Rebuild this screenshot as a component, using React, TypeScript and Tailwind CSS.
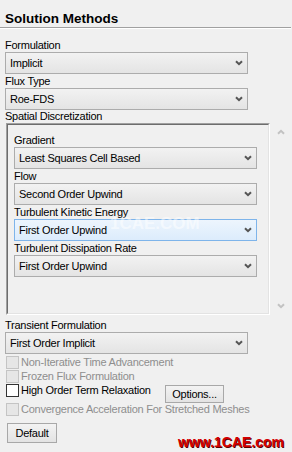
import React from "react";

function Chevron({ color = "#555" }: { color?: string }) {
  return (
    <svg width="8" height="6" viewBox="0 0 8 6" className="shrink-0">
      <path d="M1 1.2 L4 4.2 L7 1.2" fill="none" stroke={color} strokeWidth="2" />
    </svg>
  );
}

function Select({ value, active }: { value: string; active?: boolean }) {
  return (
    <div
      className={`flex h-[22px] w-[243px] items-center justify-between border pl-[4px] pr-[4px] ${
        active
          ? "border-[#7eb4ea] bg-linear-to-b from-[#edf5fd] to-[#dcecfc]"
          : "border-[#acacac] bg-linear-to-b from-[#f2f2f2] to-[#e4e4e4]"
      }`}
    >
      <span className="leading-[14px]">{value}</span>
      <Chevron />
    </div>
  );
}

function Field({ label, value, active }: { label: string; value: string; active?: boolean }) {
  return (
    <div>
      <div className="h-[14px] leading-[14px]">{label}</div>
      <Select value={value} active={active} />
    </div>
  );
}

function Check({ label, disabled }: { label: string; disabled?: boolean }) {
  return (
    <div className="flex items-start gap-[2px]">
      <div
        className={`h-[13px] w-[13px] shrink-0 border ${
          disabled ? "border-[#c4c4c4] bg-[#e6e6e6]" : "border-[#333] bg-white"
        }`}
      />
      <span className={`whitespace-nowrap leading-[13px] ${disabled ? "text-[#8e8e8e]" : "text-black"}`}>{label}</span>
    </div>
  );
}

function Button({ children, className = "" }: { children: React.ReactNode; className?: string }) {
  return (
    <div
      className={`flex items-center justify-center border border-[#a8a8a8] bg-linear-to-b from-[#f3f3f3] to-[#e3e3e3] leading-[14px] ${className}`}
    >
      {children}
    </div>
  );
}

export default function App() {
  return (
    <div className="relative h-[452px] w-[292px] overflow-hidden bg-[#f0f0f0] font-['Liberation_Sans',Arial,sans-serif] text-[11px] tracking-[-0.25px] text-black">
      {/* Title */}
      <div className="flex h-[27px] items-end pl-[5px]">
        <h1 className="text-[13.5px] font-bold leading-[16px] tracking-normal">Solution Methods</h1>
      </div>
      <div className="h-[2px] w-[291px] border-t border-b border-t-[#a0a0a0] border-b-white" />

      {/* Main content */}
      <div className="pl-[5px] pt-[9px]">
        <Field label="Formulation" value="Implicit" />
        <Field label="Flux Type" value="Roe-FDS" />
        <div className="h-[13px] leading-[13px]">Spatial Discretization</div>

        <div className="flex">
          <div className="ml-[1px] h-[192px] w-[264px] border border-t-[#a0a0a0] border-l-[#a0a0a0] border-r-white border-b-white">
            <div className="h-full border border-t-[#6d6d6d] border-l-[#6d6d6d] border-r-[#e3e3e3] border-b-[#e3e3e3] pl-[6px] pt-[8px]">
              <Field label="Gradient" value="Least Squares Cell Based" />
              <Field label="Flow" value="Second Order Upwind" />
              <Field label="Turbulent Kinetic Energy" value="First Order Upwind" active />
              <Field label="Turbulent Dissipation Rate" value="First Order Upwind" />
            </div>
          </div>
          {/* Scrollbar */}
          <div className="flex w-[20px] flex-col items-center justify-between pl-[2px] pt-[6px] pb-[6px]">
            <svg width="8" height="6" viewBox="0 0 8 6">
              <path d="M1 4.8 L4 1.8 L7 4.8" fill="none" stroke="#c2c2c2" strokeWidth="2" />
            </svg>
            <Chevron color="#c2c2c2" />
          </div>
        </div>

        <div className="mt-[3px]">
          <Field label="Transient Formulation" value="First Order Implicit" />
        </div>

        <div className="pl-[1px]">
          <div className="h-[16px] pt-[2px]">
            <Check label="Non-Iterative Time Advancement" disabled />
          </div>
          <div className="h-[14px]">
            <Check label="Frozen Flux Formulation" disabled />
          </div>
          <div className="flex h-[19px] items-start">
            <div className="w-[159px] shrink-0">
              <Check label="High Order Term Relaxation" />
            </div>
            <Button className="mt-[1px] h-[18px] w-[59px]">Options...</Button>
          </div>
          <div className="h-[17px]">
            <Check label="Convergence Acceleration For Stretched Meshes" disabled />
          </div>
          <Button className="mt-[3px] ml-[1px] h-[20px] w-[50px]">Default</Button>
        </div>
      </div>

      {/* Watermarks */}
      <div className="pointer-events-none absolute left-[110px] top-[214px] text-[17px] font-bold leading-[20px] tracking-normal text-white/50">
        1CAE.COM
      </div>
      <div className="pointer-events-none absolute left-[178px] top-[434px] text-[14px] font-bold leading-[16px] tracking-normal text-[#d40000] [text-shadow:1px_1px_0_#5a0000]">
        www.1CAE.com
      </div>
    </div>
  );
}
